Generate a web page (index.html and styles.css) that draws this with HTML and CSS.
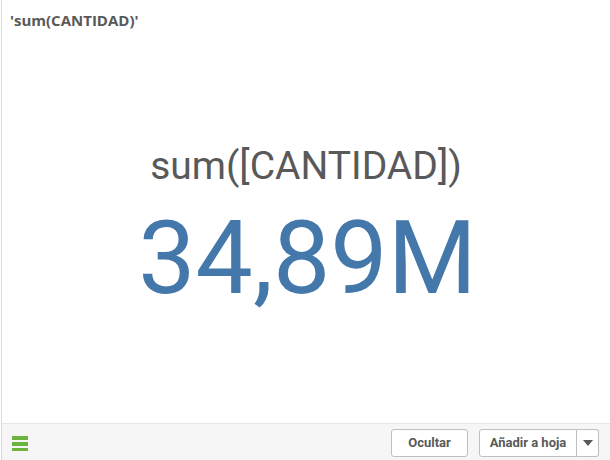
FILE: index.html
```html
<!DOCTYPE html>
<html>
<head>
<meta charset="utf-8">
<link rel="stylesheet" href="styles.css">
</head>
<body>
<div class="panel">
  <div class="title">'sum(CANTIDAD)'</div>
  <div class="kpi">
    <div class="kpi-label">sum([CANTIDAD])</div>
    <div class="kpi-value">34,89M</div>
  </div>
  <div class="footer">
    <svg class="menu" width="16" height="16" viewBox="0 0 16 16">
      <rect x="0" y="1" width="16" height="4" fill="#6cb33f"/>
      <rect x="0" y="7" width="16" height="4" fill="#6cb33f"/>
      <rect x="0" y="13" width="16" height="4" fill="#6cb33f"/>
    </svg>
    <div class="actions">
      <button class="btn btn-hide">Ocultar</button>
      <div class="split">
        <button class="btn split-main">Añadir a hoja</button>
        <button class="btn split-arrow"><svg width="10" height="6" viewBox="0 0 10 6"><path d="M0 0H10L5 6Z" fill="#595959"/></svg></button>
      </div>
    </div>
  </div>
</div>
</body>
</html>
```
FILE: styles.css
```css
html, body { margin: 0; padding: 0; }
body {
  width: 610px; height: 460px; overflow: hidden; background: #fff;
  font-family: Roboto, "Liberation Sans", sans-serif;
}
.panel {
  height: 460px; box-sizing: border-box;
  border-left: 1px solid #d9d9d9; margin-left: 1px;
  display: flex; flex-direction: column;
}
.title {
  font-family: "Open Sans", Roboto, sans-serif;
  font-size: 15px; font-weight: bold; color: #595959;
  padding: 10px 0 0 8px; height: 21px; line-height: 20px;
}
.kpi {
  flex: 1; display: flex; flex-direction: column; align-items: center;
  padding-top: 112px;
}
.kpi-label { font-size: 39px; color: #595959; line-height: 46px; }
.kpi-value { font-size: 102px; color: #4477aa; line-height: 110px; margin-top: 14px; margin-left: 3px; }
.footer {
  height: 36px; border-top: 1px solid #e6e6e6; background: #f6f6f6;
  display: flex; align-items: center; justify-content: space-between;
  padding: 0 11px 0 10px;
}
.menu { display: block; margin-top: 1px; }
.actions { display: flex; gap: 11px; align-items: center; margin-top: 1px; }
.btn {
  font-family: inherit; font-size: 13px; font-weight: bold; color: #595959;
  background: #fff; border: 1px solid #bfbfbf; border-radius: 3px;
  height: 28px; padding: 0; margin: 0;
}
.btn-hide { width: 77px; }
.split { display: flex; }
.split-main { border-radius: 3px 0 0 3px; width: 98px; }
.split-arrow { border-radius: 0 3px 3px 0; border-left: none; width: 22px; display: flex; align-items: center; justify-content: center; }
.split-arrow svg { display: block; }
```
